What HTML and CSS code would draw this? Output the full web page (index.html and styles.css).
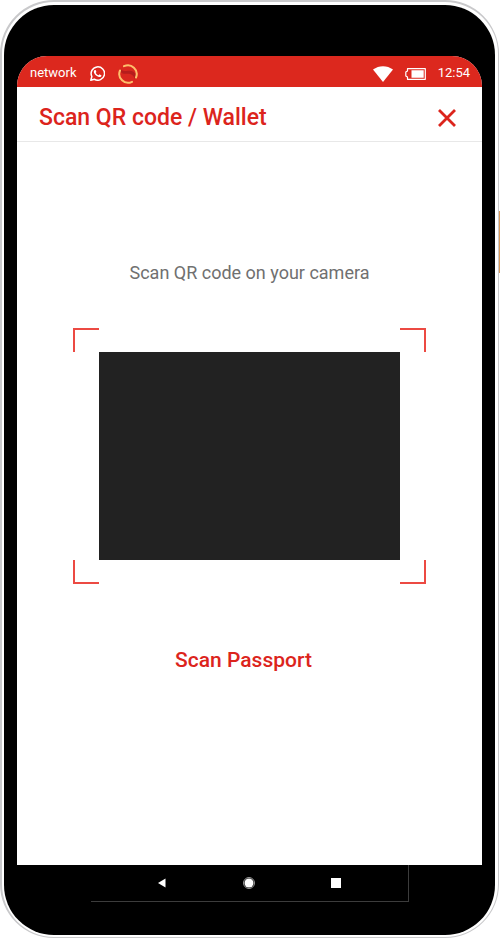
FILE: index.html
```html
<!DOCTYPE html>
<html lang="en">
<head>
<meta charset="utf-8">
<meta name="viewport" content="width=device-width, initial-scale=1">
<title>Scan QR code / Wallet</title>
<link rel="stylesheet" href="styles.css">
</head>
<body>
<div class="phone">
  <div class="bezel">
    <div class="screen">
      <div class="status">
        <span>network</span>
        <svg class="whatsapp" viewBox="0 0 24 24" aria-hidden="true"><path fill="#fff" d="M17.5 14.4c-.3-.1-1.800-.9-2-1-.3-.1-.5-.1-.7.200-.2.3-.8 1-.9 1.100-.2.200-.3.200-.6.100-.3-.2-1.300-.5-2.400-1.500-.9-.8-1.500-1.800-1.700-2.100-.2-.3 0-.5.1-.6l.5-.5c.1-.2.200-.3.300-.5.100-.2 0-.4 0-.5-.1-.1-.7-1.600-.9-2.200-.2-.6-.5-.5-.7-.5h-.6c-.2 0-.5.100-.8.400-.3.300-1 1-1 2.500s1.100 2.900 1.200 3.100c.1.200 2.100 3.200 5.100 4.500.7.300 1.300.5 1.700.6.700.2 1.400.2 1.900.1.600-.1 1.800-.7 2-1.400.2-.7.200-1.300.2-1.400-.1-.2-.3-.3-.7-.4z"/><path fill="none" stroke="#fff" stroke-width="2.400" stroke-linejoin="round" d="M1.300 22.700 3 16.900A10.700 10.700 0 1 1 7 21.200Z"/></svg>
        <svg class="swirl" viewBox="0 0 20 20" aria-hidden="true"><circle cx="10" cy="10" r="8.500" fill="#d9271f"/><path fill="#b51d1c" d="M2 4.500C2 8.500 4 10 8 9.700c5-.4 8 1.300 9 5.800 1.500-3 1-6.500-2-8-2.500-1.300-5-.3-8-.6C4.500 6.700 3 6 2 4.500Z"/><g fill="none" stroke="#fdbf6b" stroke-width="2" stroke-linecap="round"><path d="M6 2.200A8.800 8.800 0 0 1 18 13.500"/><path d="M14 17.800A8.800 8.800 0 0 1 2 6.500"/></g></svg>
        <svg class="wifi" viewBox="0 0 20 16" aria-hidden="true"><path fill="#fff" d="M0 3.500C6-1 14-1 20 3.500L10 16Z"/></svg>
        <svg class="battery" viewBox="0 0 21 12" aria-hidden="true"><path fill="none" stroke="#fff" stroke-width="1.200" stroke-linejoin="round" d="M2.500.7H20.300V11.300H2.500V9L.8 8V4L2.500 3Z"/><path fill="#fff" d="M6.500 2.300H18.700V9.700H6.500Z"/></svg>
        <time>12:54</time>
      </div>
      <header class="titlebar">
        <h1>Scan QR code / Wallet</h1>
        <button class="close" type="button" aria-label="Close"><svg viewBox="0 0 18 18" aria-hidden="true"><path stroke="#dc241c" stroke-width="2.800" d="m1 1 16 16M17 1 1 17"/></svg></button>
      </header>
      <main class="scan">
        <p>Scan QR code on your camera</p>
        <div class="finder">
          <span class="corner tl"></span><span class="corner tr"></span>
          <div class="camera"></div>
          <span class="corner bl"></span><span class="corner br"></span>
        </div>
        <button class="passport" type="button">Scan Passport</button>
      </main>
    </div>
    <nav class="nav">
      <button type="button" aria-label="Back"><svg viewBox="0 0 14 14" aria-hidden="true"><path fill="#fff" d="M3 7 10.500 2.500v9Z"/></svg></button>
      <button type="button" aria-label="Home"><svg viewBox="0 0 14 14" aria-hidden="true"><circle cx="7" cy="7" r="5.500" fill="#000" stroke="#999"/><circle cx="7" cy="7" r="4.500" fill="#fff"/></svg></button>
      <button type="button" aria-label="Recent apps"><svg viewBox="0 0 14 14" aria-hidden="true"><path fill="#fff" d="M2 2h10v10H2Z"/></svg></button>
    </nav>
  </div>
  <span class="power"></span>
</div>
</body>
</html>
```
FILE: styles.css
```css
* { box-sizing: border-box; }
body {
  margin: 0;
  background: #fff;
  font-family: Roboto, sans-serif;
}
button {
  padding: 0;
  border: 0;
  background: none;
  font: inherit;
  cursor: pointer;
}
svg { display: block; }
.phone {
  position: relative;
  display: flex;
  min-height: 100vh;
  margin-right: 1px;
  padding: 3px 3px 2px 2px;
  border: 1px solid #c9c9cb;
  border-width: 2px 1px 1px 2px;
  border-radius: 54px;
}
.power {
  position: absolute;
  top: 209px;
  right: -2px;
  width: 1px;
  height: 62px;
  background: #d99a5c;
}
.bezel {
  display: flex;
  flex: 1;
  flex-direction: column;
  padding: 51px 13px 33px;
  border-radius: 50px;
  background: #000;
}
.screen {
  display: flex;
  flex: 1;
  flex-direction: column;
  overflow: hidden;
  border-radius: 30px 30px 0 0;
  background: #fff;
}
.status {
  display: flex;
  align-items: center;
  height: 31px;
  padding: 4px 12px 0 13px;
  background: #dc281e;
  color: #fff;
  font-size: 13px;
  line-height: 16px;
}
.status span, time { padding-bottom: 2px; }
.whatsapp { width: 15px; height: 15px; margin-left: 13px; }
.swirl { width: 20px; height: 20px; margin-left: 13px; }
.wifi { width: 20px; height: 16px; margin-left: auto; }
.battery { width: 21px; height: 12px; margin: 0 12px; }
.titlebar {
  display: flex;
  align-items: center;
  justify-content: space-between;
  height: 55px;
  padding: 7px 26px 0 22px;
  border-bottom: 1px solid #e8e8e8;
}
h1 {
  margin: 0;
  color: #dc241c;
  font-size: 23px;
  font-weight: 500;
  line-height: 28px;
}
.close svg { width: 18px; height: 18px; }
.scan {
  display: flex;
  flex: 1;
  flex-direction: column;
  align-items: center;
}
.scan p {
  margin: 119px 0 43px;
  color: #707070;
  font-size: 18px;
  line-height: 24px;
}
.finder {
  display: grid;
  grid-template-columns: 26px 1fr 26px;
  grid-template-rows: 24px 208px 24px;
  width: 76%;
}
.camera {
  grid-area: 2 / 2;
  background: #222;
}
.corner { border: 0 solid #ec4a43; }
.tl { grid-area: 1 / 1; border-width: 2px 0 0 2px; }
.tr { grid-area: 1 / 3; border-width: 2px 2px 0 0; }
.bl { grid-area: 3 / 1; border-width: 0 0 2px 2px; }
.br { grid-area: 3 / 3; border-width: 0 2px 2px 0; }
.passport {
  margin: 64px 12px 0 0;
  color: #dc241c;
  font-size: 21px;
  font-weight: 500;
  line-height: 24px;
}
.nav {
  display: flex;
  align-items: center;
  justify-content: space-between;
  height: 37px;
  margin: 0 73px 0 74px;
  padding: 0 65px 0 64px;
  border: 1px solid #3c3c3c;
  border-width: 0 1px 1px 0;
}
.nav svg { width: 14px; height: 14px; }
```
